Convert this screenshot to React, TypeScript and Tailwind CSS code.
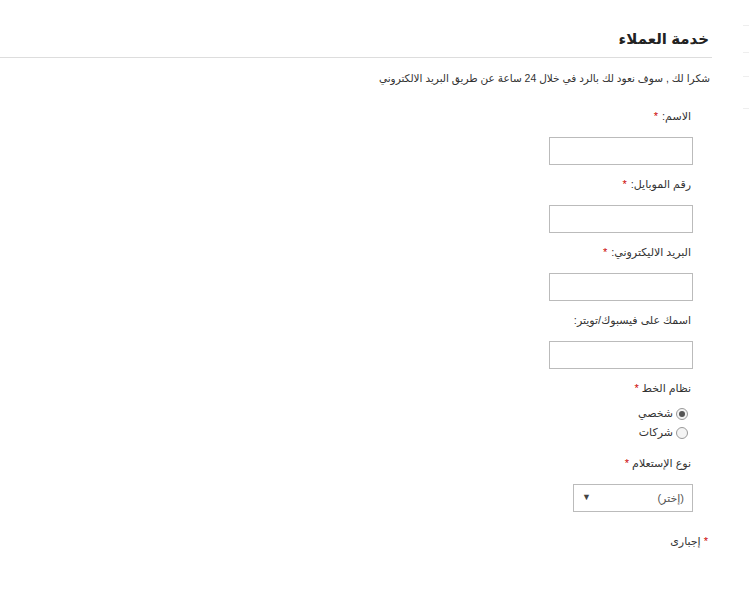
export default function App() {
  const fields = [
    { label: "الاسم:", required: true },
    { label: "رقم الموبايل:", required: true },
    { label: "البريد الاليكتروني:", required: true },
    { label: "اسمك على فيسبوك/تويتر:", required: false },
  ];

  return (
    <div
      dir="rtl"
      className="min-h-[593px] w-[749px] bg-white text-[#333] flex"
      style={{ fontFamily: '"Liberation Sans", Arial, "DejaVu Sans", sans-serif' }}
    >
      {/* faint sidebar edge */}
      <div className="w-[37px] shrink-0 flex flex-col items-start">
        <div className="mt-[25px] h-px w-[6px] bg-[#eee]" />
        <div className="mt-[26px] h-px w-[6px] bg-[#eee]" />
        <div className="mt-[23px] h-px w-[6px] bg-[#eee]" />
        <div className="mt-[31px] h-px w-[6px] bg-[#eee]" />
      </div>

      <div className="w-[712px] shrink-0">
        <h1 className="pt-[29px] pr-[3px] text-[15px] font-bold leading-[19px] text-[#222]">
          خدمة العملاء
        </h1>
        <div className="mt-[9px] h-px w-full bg-[#ddd]" />
        <p className="mt-[12px] pr-[2px] text-[10.5px] leading-[16px] text-[#333]">
          شكرا لك , سوف نعود لك بالرد في خلال 24 ساعة عن طريق البريد الالكتروني
        </p>

        <form className="pr-[21px] mt-[22px] text-[11px]">
          {fields.map((f) => (
            <div key={f.label} className="h-[68px]">
              <label className="block leading-[16px] h-[16px]">
                {f.label}
                {f.required && <span className="text-[#c00] mr-1">*</span>}
              </label>
              <input
                type="text"
                className="mt-[13px] block w-[144px] h-[28px] border border-[#bbb] bg-white -mr-[2px]"
              />
            </div>
          ))}

          <div>
            <label className="block leading-[16px]">
              نظام الخط <span className="text-[#c00]">*</span>
            </label>
            <div className="mt-[10px] flex flex-col gap-[4px] leading-[15px] mr-[3px]">
              <label className="flex items-center gap-[3px]">
                <span className="w-[12px] h-[12px] rounded-full border border-[#999] bg-[#f4f4f4] flex items-center justify-center">
                  <span className="w-[6px] h-[6px] rounded-full bg-[#555]" />
                </span>
                شخصي
              </label>
              <label className="flex items-center gap-[3px]">
                <span className="w-[12px] h-[12px] rounded-full border border-[#999] bg-[#f4f4f4]" />
                شركات
              </label>
            </div>
          </div>

          <div className="mt-[15px]">
            <label className="block leading-[16px]">
              نوع الإستعلام <span className="text-[#c00]">*</span>
            </label>
            <div className="mt-[13px] -mr-[2px] w-[120px] h-[28px] border border-[#bbb] flex items-center justify-between px-[8px] text-[11px] text-[#555]">
              <span>(إختر)</span>
              <span className="text-[9px] text-[#444]">▼</span>
            </div>
          </div>
        </form>

        <p className="mt-[21px] pr-[4px] text-[11px] leading-[16px]">
          <span className="text-[#c00]">*</span> إجبارى
        </p>
      </div>
    </div>
  );
}
